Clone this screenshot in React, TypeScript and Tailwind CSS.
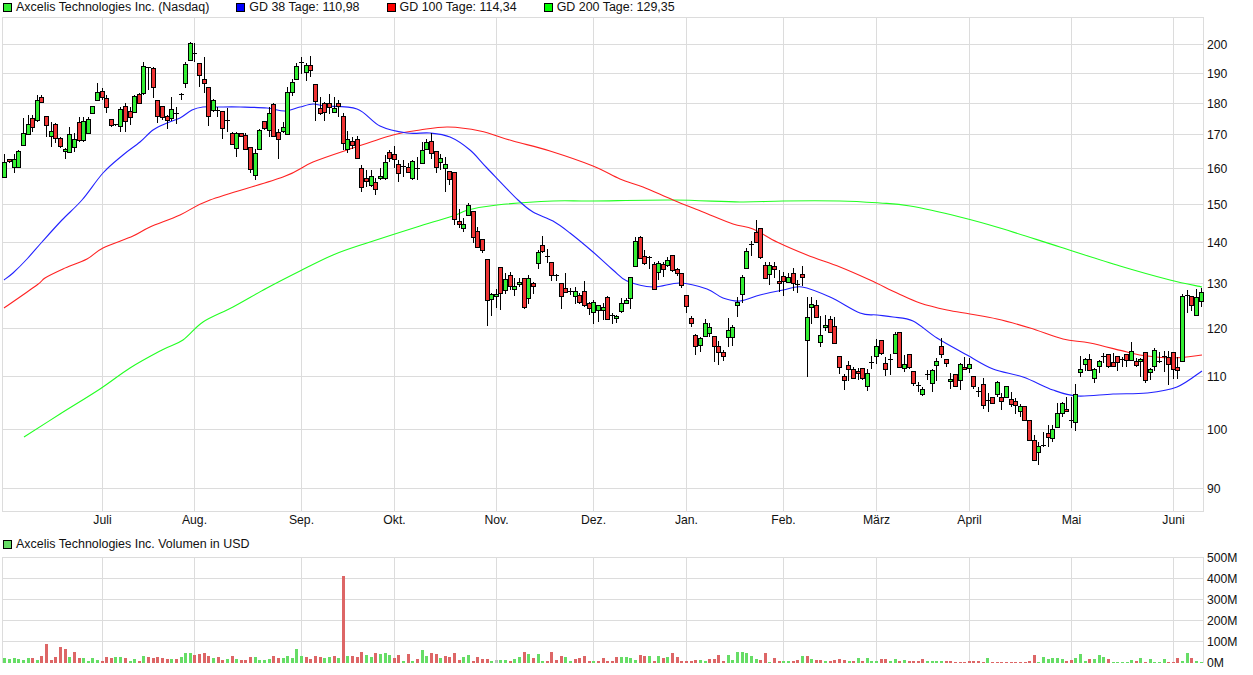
const green = "#33ee33";
const red = "#ee3333";
const gridColor = "#dcdcdc";

const priceLines: [number, string][] = [
  [44.5, "200"], [73.5, "190"], [103.5, "180"], [134.5, "170"], [168.5, "160"], [204.5, "150"],
  [242.5, "140"], [283.5, "130"], [328.5, "120"], [376.5, "110"], [429.5, "100"], [488.5, "90"],
];
const months: [number, string][] = [
  [102.5, "Juli"], [194.5, "Aug."], [301.5, "Sep."], [394.5, "Okt."], [496.5, "Nov."], [593.5, "Dez."],
  [686.5, "Jan."], [783.5, "Feb."], [876.5, "März"], [969.5, "April"], [1071.5, "Mai"], [1173.5, "Juni"],
];
const volumeLines: [number, string][] = [
  [557.5, "500M"], [578.5, "400M"], [599.5, "300M"], [620.5, "200M"], [641.5, "100M"], [662.5, "0M"],
];

// candles read off the chart at 3x: x, body top, body bottom, wick top, wick bottom, colour
const candlesA = `13,485,530,462,530,g 28,476,482,476,490,r 43,476,502,462,518,g 55,454,502,450,502,g 70,400,436,355,436,g 85,373,403,345,403,g 98,355,380,345,395,r 112,301,361,285,365,g 125,290,307,285,307,r 139,349,376,349,410,r 153,394,409,365,440,g 166,373,413,370,430,r 181,415,439,410,445,r 196,446,454,445,476,g 208,403,457,380,457,g 223,418,442,400,456,g 238,367,421,350,425,r 250,364,421,350,425,g 265,358,400,352,402,g 278,319,340,317,340,g 292,277,301,250,301,g 307,274,292,265,300,r 319,295,322,286,340,r 334,358,376,358,380,r 347,375,375,373,377,d 361,328,379,320,395,g 376,319,364,310,395,r 391,334,352,320,375,r 403,289,337,285,340,g 418,283,310,280,312,r 430,199,280,186,285,g 445,205,205,200,270,d 460,205,262,200,295,r 473,301,349,301,368,r 487,319,352,317,360,r 502,349,361,345,388,r 515,328,355,292,362,g 529,341,341,320,372,d 544,284,284,278,300,d 556,193,250,185,265,g 571,130,181,127,182,g 584,163,163,130,185,d 598,190,226,190,260,r 613,238,250,172,280,r 625,262,348,262,378,r 640,301,331,298,335,g 653,334,334,320,350,d 667,334,385,334,418,r 682,362,362,325,395,d 697,400,433,395,435,r 709,400,445,395,470,g 724,400,409,398,412,r 736,406,448,400,450,r 751,442,508,442,518,r 766,460,526,448,540,g 778,391,448,388,450,g 793,364,385,362,390,r 808,340,391,320,410,g 820,313,409,310,412,r 835,397,418,388,476,r 850,382,394,365,398,g 862,277,401,262,402,g 877,247,277,238,288,g 889,199,238,190,240,g 904,190,190,172,222,d 919,196,217,190,242,g 931,196,211,168,232,r 946,253,304,253,362,r 961,325,340,292,345,r 973,310,337,305,362,r 988,310,322,283,342,r 1003,325,337,292,340,g 1015,310,319,300,352,r 1030,349,430,340,450,r 1042,418,448,392,460,g 1057,424,436,410,448,r 1072,418,475,408,475,r 1084,505,562,495,575,r 1099,535,544,510,560,r 1114,529,556,510,560,g 1126,547,568,535,585,r 1141,529,535,505,540,g 1156,487,535,465,540,g 1168,457,475,450,485,r 1183,463,478,438,505,r 1196,493,520,480,545,r 1210,502,502,480,530,d 1225,502,517,490,520,r 1238,484,535,480,540,g 1253,506,506,470,540,d 1267,451,490,425,492,g 1280,427,448,418,450,g 1295,424,460,398,476,r 1309,454,502,454,518,r 1322,475,487,462,510,g 1336,493,505,472,575,g 1348,514,538,514,555,r`;
const candlesB = `103,-84,58,-84,75,r 118,62,73,28,85,r 131,73,85,55,97,g 145,16,46,10,48,g 160,34,112,34,130,r 172,94,142,80,145,r 187,118,151,118,160,r 203,178,301,178,378,r 215,283,298,278,348,g 229,283,289,268,325,g 241,202,280,202,330,r 256,238,271,220,283,g 271,226,259,216,270,r 284,259,268,235,288,g 298,247,253,235,262,g 313,235,322,235,326,r 326,235,295,225,312,g 340,250,259,245,282,r 355,157,190,150,206,g 368,136,154,108,160,r 383,172,172,148,190,d 394,187,226,187,242,r 410,229,229,222,242,d 424,250,289,250,326,r 437,265,277,220,280,r 452,275,275,265,285,d 466,274,289,262,312,g 479,286,307,280,312,r 493,274,316,243,322,r 508,310,325,305,345,r 520,305,337,300,372,g 535,316,331,316,365,g 550,322,331,308,360,g 563,292,358,288,360,r 577,347,347,340,372,d 590,349,355,345,368,g 604,310,334,295,340,g 619,301,310,295,312,g 632,232,295,232,327,g 646,124,199,110,200,g 661,112,175,108,178,r 674,169,190,150,195,r 688,175,175,168,208,d 703,193,268,185,270,r 715,190,217,182,240,g 730,193,208,185,232,r 743,181,196,170,200,g 757,166,211,166,215,r 772,208,220,205,228,r 785,220,256,220,265,r 799,286,319,286,338,r 814,355,370,348,380,r 826,406,439,403,464,r 841,415,436,412,455,g 856,370,409,358,412,g 868,382,400,370,410,g 883,409,439,409,485,r 895,439,457,423,495,r 910,457,469,450,482,r 925,391,412,355,440,g 938,382,412,375,438,g 952,307,316,290,350,g 967,232,283,225,310,g 980,154,205,145,207,g 994,136,136,122,168,d 1009,97,127,60,130,r 1021,85,172,85,178,r 1036,196,235,186,238,r 1048,196,223,186,255,g 1063,199,208,186,235,r 1078,244,250,210,275,r 1090,229,244,215,288,r 1105,232,247,218,250,g 1120,220,250,205,272,r 1132,254,254,240,278,d 1147,223,232,198,258,r 1162,352,421,290,530,g 1174,313,322,290,372,g 1189,316,352,300,355,r 1201,406,427,348,440,g 1216,376,382,345,392,g 1231,358,397,348,400,r 1243,379,430,350,433,r`;
const candlesC = `178,229,262,229,282,r 193,289,301,282,330,r 205,256,268,243,302,r 220,268,295,262,298,r 235,274,280,265,300,r 247,265,295,265,300,r 262,280,319,268,332,g 274,250,250,228,266,d 289,199,229,178,252,g 304,181,220,181,225,r 316,250,268,232,288,r 331,241,241,222,285,d 346,163,220,155,222,g 358,157,262,155,264,r 373,253,265,225,276,g 388,223,262,223,268,r 400,274,310,272,318,r 415,317,317,305,335,d 427,328,343,322,347,g 442,286,286,270,300,d 457,271,310,268,335,g 469,244,256,235,303,g 484,199,223,175,235,r 499,238,250,238,262,r 511,298,304,280,326,g 526,283,319,283,320,r 541,253,301,250,330,g 553,262,268,230,270,r 568,253,265,235,280,g 580,289,319,289,326,r 595,335,335,320,352,d 610,313,376,295,386,r 625,362,362,340,395,d 637,352,370,350,372,r 652,307,343,304,352,g 665,352,364,340,390,r 679,319,352,319,355,g 694,358,373,335,380,r 706,364,376,355,402,r 721,379,394,372,412,g 733,379,421,379,424,r 748,421,481,421,483,r 763,481,540,465,542,r 775,499,517,487,555,g 790,497,497,457,500,d 805,460,472,435,500,r 817,448,475,435,485,g 832,400,442,370,444,g 847,370,400,367,410,g 860,388,394,350,397,r 874,423,423,350,445,d 886,343,427,312,452,g 901,268,277,228,290,g 916,238,253,235,272,g 929,238,271,222,272,r 943,268,295,265,308,g 958,244,259,240,278,g 971,232,232,218,248,d 985,223,259,223,265,r 1000,247,259,220,262,r 1012,229,247,229,272,r 1027,241,241,232,262,d 1039,223,241,222,260,r 1054,214,241,186,242,g 1069,244,256,235,260,r 1081,238,244,235,292,g 1096,217,301,217,308,r 1111,268,277,264,300,g 1123,211,259,204,272,g 1138,245,245,215,250,d 1152,232,232,214,276,d 1165,232,253,214,315,r 1180,217,268,216,297,r 1192,262,271,232,297,r 1207,49,244,43,245,g 1222,47,47,30,100,d 1234,47,76,47,92,r 1249,50,104,28,106,g 1264,35,62,25,80,g`;

// volume bars: x at 3x, height in px, colour
const volumeA = `13g5 28g4 43g5 55g4 70g3 85g5 98r5 112g3 125r7 139r19 153r3 166r6 181r16 196r14 208g6 223r11 238r5 250g5 265g2 278g5 292g3 307r2 319r6 334r5 347g6 361g6 376r5 391g2 403g4 418r2 430g7 445r6 460r5 473r6 487r5 502r4 515g4 529r4 544g6 556g10 571g10 584r8 598r9 613r10 625r7 640g5 655r6 667r3 682g4 697r7 709g4 724r3 736r3 751r6 766g6 778g3 793g3 808g4 820r7 835r5 850g5 862g7 877g5 889g14 904g7 919r6 931r4 946r7 961r6 973g5 988g6 1003r7 1015g5 1030r87 1042g7 1057r7 1072r6 1084r11 1099g8 1114g6 1126r10 1141g9 1156g10 1168g8 1183r5 1196r8 1210g2 1225r9 1238g2 1253r4`;
const volumeB = `7g13 20g7 35r10 49r9 62g5 76r7 88r6 103r10 118r3 131g6 145g8 160r2 172r6 187r4 202r4 215g2 229n3 241g3 256g3 271r2 284g4 298g6 313r11 326g9 340r5 355g9 368g2 383r2 394r11 410r3 424r7 437g6 452g2 466r4 479r5 493r7 508r2 520g2 535r2 550r5 563r2 577r2 590r6 604g6 619g6 632g5 646g3 661r8 674r7 688g7 703r2 715g7 730r5 743g6 757r10 772r6 785r2 799r2 814r2 826r3 841g3 856g2 868r4 883r4 895r8 910r2 925g8 938g3 952g11 967g11 980g10 994g7 1009g4 1021r3 1036r10 1048g1 1063r5 1078r2 1090g2 1105g2 1120r2 1132r3 1147g7 1162r7 1174g4 1189r3 1201r3 1216g2 1231r2 1243r3 1258r4`;
const volumeC = `12r3 27g2 40r2 55g5 68r2 82g5 95g2 110g2 124r4 137r4 152g2 166g4 179r2 193g3 208r2 221r2 235r2 248r4 262g2 276g2 290g2 304g2 319r2 332r2 346r1 360r1 374r1 388r2 401r2 415r2 430r1 443g5 457r1 471r1 485r1 499r1 513r1 527r1 541r1 555r1 569r2 583r8 596g1 610g6 625g4 638g5 652g5 667g4 680r2 694r3 707g5 721g9 736g2 749r4 763g4 778g8 790g6 805r4 819g1 833g1 847g1 861g1 875g3 889r2 902g5 916r1 930g4 944g1 958g1 972g4 986r1 1000r1 1012r5 1027g2 1042g10 1054r5 1069g2 1083g1`;

type Candle = { x: number; top: number; bottom: number; wickTop: number; wickBottom: number; color: string };

const parseCandles = (raw: string, offsetX: number, offsetY: number): Candle[] =>
  raw.split(" ").map((item) => {
    const [x, top, bottom, wickTop, wickBottom, color] = item.split(",");
    return {
      x: Math.floor(offsetX + Number(x) / 3),
      top: Math.round(offsetY + Number(top) / 3),
      bottom: Math.round(offsetY + Number(bottom) / 3),
      wickTop: Math.round(offsetY + Number(wickTop) / 3),
      wickBottom: Math.round(offsetY + Number(wickBottom) / 3),
      color,
    };
  });

const parseVolume = (raw: string, offsetX: number) =>
  raw.split(" ").map((item) => {
    const match = item.match(/^(\d+)([a-z])(\d+)$/)!;
    return { x: Math.floor(offsetX + Number(match[1]) / 3), color: match[2], height: Number(match[3]) };
  });

const candles = [...parseCandles(candlesA, 0, 0), ...parseCandles(candlesB, 420, 200), ...parseCandles(candlesC, 780, 280)];
const volumes = [...parseVolume(volumeA, 0), ...parseVolume(volumeB, 420), ...parseVolume(volumeC, 840)];

const gd38 =
  "4,280 13,273 27,259 42,242 62,220 82,200 103,173 123,155 140,142 153,130 167,123 180,118 192,110 203,107 217,107 240,107 267,108 285,111 300,107 313,104 325,106 357,109 380,126 407,133 430,133 450,137 470,150 487,168 518,200 533,212 553,221 570,233 593,252 613,270 627,281 653,287 680,283 707,289 723,298 740,301 760,295 783,290 802,287 830,297 860,313 877,315 893,317 913,321 937,338 967,355 993,369 1023,377 1053,390 1077,396 1113,394 1147,393 1177,387 1202,371";
const gd100 =
  "4,308 37,285 45,278 63,269 87,259 103,248 133,236 150,227 180,215 210,200 283,177 313,162 353,148 393,135 420,130 448,127 480,131 513,141 550,151 593,166 620,179 643,187 673,200 703,212 733,224 753,229 777,242 807,255 840,267 870,280 897,293 920,303 947,310 970,314 997,319 1030,328 1063,339 1090,343 1127,352 1147,356 1173,358 1202,355";
const gd200 =
  "24,437 60,414 100,389 130,368 162,350 183,340 203,322 233,307 267,288 300,271 333,255 367,243 420,226 453,216 468,210 497,205 553,201 593,201 673,200 740,202 783,201 840,201 880,203 910,206 960,217 1000,228 1060,247 1120,266 1170,280 1202,287";

// catmull-rom through the read-off points, the averages have no corners
function smoothPath(raw: string) {
  const pts = raw.split(" ").map((p) => p.split(",").map(Number));
  let d = `M${pts[0][0]} ${pts[0][1]}`;
  for (let i = 0; i < pts.length - 1; i++) {
    const a = pts[Math.max(i - 1, 0)];
    const b = pts[i];
    const c = pts[i + 1];
    const e = pts[Math.min(i + 2, pts.length - 1)];
    const c1x = b[0] + (c[0] - a[0]) / 6;
    const c1y = b[1] + (c[1] - a[1]) / 6;
    const c2x = c[0] - (e[0] - b[0]) / 6;
    const c2y = c[1] - (e[1] - b[1]) / 6;
    d += ` C${c1x.toFixed(1)} ${c1y.toFixed(1)} ${c2x.toFixed(1)} ${c2y.toFixed(1)} ${c[0]} ${c[1]}`;
  }
  return d;
}

function Grid({ top, bottom, rows }: { top: number; bottom: number; rows: [number, string][] }) {
  return (
    <g stroke={gridColor} strokeWidth={1} shapeRendering="crispEdges">
      <line x1={2.5} x2={2.5} y1={top} y2={bottom} />
      <line x1={1203.5} x2={1203.5} y1={top} y2={bottom} />
      <line x1={2} x2={1204} y1={top} y2={top} />
      {months.map(([x, label]) => (
        <line key={label} x1={x} x2={x} y1={top} y2={bottom} />
      ))}
      {rows.map(([y, label]) => (
        <line key={label} x1={2} x2={1204} y1={y} y2={y} />
      ))}
    </g>
  );
}

function LegendItem({ color, label }: { color: string; label: string }) {
  return (
    <div className="flex items-center gap-1">
      <span className="w-[9px] h-[9px] border border-black" style={{ backgroundColor: color }} />
      <span className="whitespace-nowrap">{label}</span>
    </div>
  );
}

export default function App() {
  return (
    <div className="w-[1253px] h-[675px] bg-white overflow-hidden flex flex-col text-[12.45px] leading-[14px] text-[#111] font-['Liberation_Sans',Arial,sans-serif]">
      <div className="h-[17px] pl-[3px] flex items-start gap-[27px]">
        <LegendItem color={green} label="Axcelis Technologies Inc. (Nasdaq)" />
        <LegendItem color="#0000ff" label="GD 38 Tage: 110,98" />
        <LegendItem color="#ff0000" label="GD 100 Tage: 114,34" />
        <LegendItem color="#00ff00" label="GD 200 Tage: 129,35" />
      </div>

      <svg viewBox="0 17 1253 517" className="w-[1253px] h-[517px] shrink-0 block" fontSize={12.2} fill="#111">
        <Grid top={17.5} bottom={511.5} rows={[...priceLines, [511.5, "bottom"]]} />
        <path d={smoothPath(gd200)} fill="none" stroke="#22ff22" strokeWidth={1.1} />
        <path d={smoothPath(gd100)} fill="none" stroke="#ff2222" strokeWidth={1.1} />
        <path d={smoothPath(gd38)} fill="none" stroke="#2222ff" strokeWidth={1.1} />
        <g shapeRendering="crispEdges">
          {candles.map((c) => (
            <g key={c.x}>
              <rect x={c.x} y={c.wickTop} width={1} height={Math.max(c.wickBottom - c.wickTop, 1)} fill="#000" />
              {c.color === "d" ? (
                <rect x={c.x - 2} y={c.top - 1} width={5} height={1} fill="#000" />
              ) : (
                <rect
                  x={c.x - 1.5}
                  y={c.top + 0.5}
                  width={4}
                  height={Math.max(c.bottom - c.top, 1)}
                  fill={c.color === "g" ? green : red}
                  stroke="#000"
                  strokeWidth={1}
                />
              )}
            </g>
          ))}
        </g>
        {priceLines.map(([y, label]) => (
          <text key={label} x={1207} y={y + 4.5}>
            {label}
          </text>
        ))}
        {months.map(([x, label]) => (
          <text key={label} x={x} y={524} textAnchor="middle">
            {label}
          </text>
        ))}
      </svg>

      <div className="h-[17px] pl-[3px] flex items-start pt-[3px]">
        <LegendItem color="#66dd66" label="Axcelis Technologies Inc. Volumen in USD" />
      </div>

      <svg viewBox="0 551 1253 124" className="w-[1253px] h-[124px] shrink-0 block" fontSize={12.2} fill="#111">
        <Grid top={557.5} bottom={662.5} rows={volumeLines.slice(1, 5)} />
        <g shapeRendering="crispEdges">
          {volumes.map((v) => (
            <rect
              key={v.x}
              x={v.x - 1}
              y={663 - v.height}
              width={3}
              height={v.height}
              fill={v.color === "g" ? "#66dd66" : v.color === "r" ? "#dd6666" : "#bbbbbb"}
            />
          ))}
        </g>
        {volumeLines.map(([y, label]) => (
          <text key={label} x={1207} y={y + 4.5}>
            {label}
          </text>
        ))}
      </svg>
    </div>
  );
}
